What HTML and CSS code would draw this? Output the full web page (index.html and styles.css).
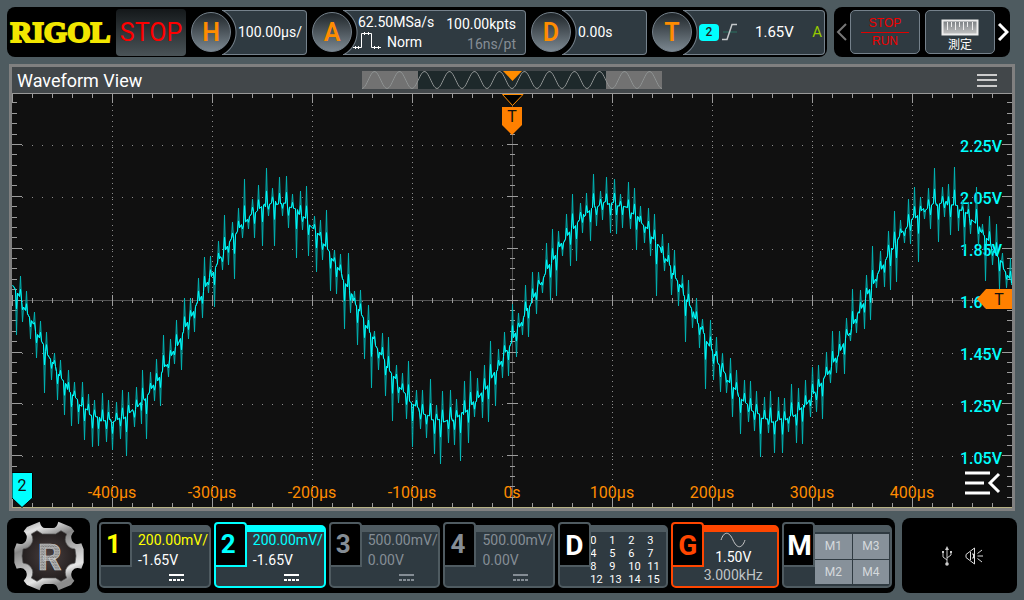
FILE: index.html
```html
<!DOCTYPE html>
<html lang="en">
  <head>
    <meta charset="UTF-8" />
    <meta name="viewport" content="width=device-width, initial-scale=1.0" />
    <title>Waveform View</title>
    <link rel="stylesheet" href="styles.css">
  </head>
  <body>
    <header class="topbar">
      <div class="panel status">
        <div class="logo">RIGOL</div>
        <button class="stop" type="button">STOP</button>
        <div class="module">
          <button class="knob" type="button">H</button>
          <div class="info">100.00µs/</div>
        </div>
        <div class="module">
          <button class="knob" type="button">A</button>
          <div class="info acquire">
            <div class="acquire-col">
              <span>62.50MSa/s</span>
              <span class="mode">
                <svg class="pulse" width="28" height="18" viewBox="0 0 28 18">
                  <path d="M0 15.500h8.500V1.500h10v14H28M2.500 14v3M5.500 14v3M21.500 14v3M25.500 14v3M11.500 0v3M15.500 0v3" fill="none" stroke="#fff" />
                </svg>
                Norm
              </span>
            </div>
            <div class="acquire-col right">
              <span>100.00kpts</span>
              <span class="dim">16ns/pt</span>
            </div>
          </div>
        </div>
        <div class="module">
          <button class="knob" type="button">D</button>
          <div class="info">0.00s</div>
        </div>
        <div class="module">
          <button class="knob" type="button">T</button>
          <div class="info trigger">
            <span class="source">2</span>
            <svg width="18" height="18" viewBox="0 0 18 18">
              <path d="M2 9h14" stroke="#2c5550" stroke-width="2" />
              <path d="M1 16.500h5L11 1.500h5" fill="none" stroke="#c4c8ca" stroke-width="1.500" />
            </svg>
            <span class="level">1.65V</span>
            <span class="auto">A</span>
          </div>
        </div>
      </div>
      <nav class="panel quick">
        <button class="arrow" type="button" aria-label="Previous">
          <svg width="12" height="18" viewBox="0 0 12 18"><path d="M10 1L2 9l8 8" fill="none" stroke="#777" stroke-width="2" /></svg>
        </button>
        <button class="tile run" type="button"><span class="run-top">STOP</span><span>RUN</span></button>
        <button class="tile measure" type="button">
          <svg width="38" height="18" viewBox="0 0 38 18">
            <defs>
              <linearGradient id="ruler" x2="0" y2="1"><stop stop-color="#777c80" /><stop offset="1" stop-color="#c5c5c5" /></linearGradient>
            </defs>
            <path d="M1.500 1.500h35v14h-35z" fill="url(#ruler)" stroke="#eee" stroke-width="2" />
            <path d="M6.500 3v8M10.500 3v5M14.500 3v8M18.500 3v5M22.500 3v8M26.500 3v5M31.500 3v8" stroke="#eee" />
          </svg>
          <span>測定</span>
        </button>
        <button class="arrow" type="button" aria-label="Next">
          <svg width="12" height="18" viewBox="0 0 12 18"><path d="M2 1l8 8-8 8" fill="none" stroke="#fff" stroke-width="3" /></svg>
        </button>
      </nav>
    </header>

    <main class="view">
      <div class="view-head">
        <h1>Waveform View</h1>
        <svg class="overview" width="300" height="18" viewBox="0 0 300 18">
          <path d="M0 0h300v18H0z" fill="#727272" />
          <path d="M56 0h188v18H56z" fill="#1e292b" />
          <path id="overviewWave" fill="none" stroke="#8f9393" />
          <path d="M141 0h19l-9.500 10z" fill="#ff8c00" />
        </svg>
        <button class="menu" type="button" aria-label="Menu">
          <svg width="20" height="14" viewBox="0 0 20 14"><path d="M0 2h20M0 7h20M0 13h20" stroke="#ccc" stroke-width="2" /></svg>
        </button>
      </div>
      <svg class="plot" viewBox="0 0 1000 415">
        <g id="grid">
          <path id="dots" fill="#8c8c8c" />
          <path d="M0 207.500h1000M500.500 0v415" stroke="#555" />
          <path id="ticks" fill="none" stroke="#9c9c9c" />
          <path d="M0 .500h1000" stroke="#999" />
          <path d="M0 414.500h1000" stroke="#b5b083" />
        </g>
        <g id="volts" class="volts"></g>
        <path id="spikes" class="spikes" />
        <path id="trace" class="trace" />
        <g id="times" class="times"></g>

        <path d="M490.500 1.500h20.500l-10.500 11z" fill="#000" stroke="#ff8c00" />
        <path d="M490 14h20v18l-10 10-10-10z" fill="#ff8000" />
        <text class="flag" x="500" y="29">T</text>
        <path d="M965 206l9-10h26v20h-26z" fill="#ff8000" />
        <text class="flag" x="987" y="212">T</text>
        <path d="M0 379.500h20.500v25.500l-10.500 9.500L0 405z" fill="#0ff" stroke="#000" />
        <text class="flag" x="10" y="398">2</text>
        <path d="M953 380h25M953 390h19M953 400h25M987 381l-9 9 9 9" fill="none" stroke="#fff" stroke-width="3" />
      </svg>
    </main>

    <footer class="bottombar">
      <button class="panel home" type="button" aria-label="Home">
        <svg width="70" height="70" viewBox="-105 -105 210 210">
          <defs>
            <linearGradient id="metal" x2=".4" y2="1">
              <stop stop-color="#8a8a8a" /><stop offset=".2" stop-color="#e2e2e2" /><stop offset=".4" stop-color="#858585" />
              <stop offset=".65" stop-color="#bcbcbc" /><stop offset=".85" stop-color="#e6e6e6" /><stop offset="1" stop-color="#8c8c8c" />
            </linearGradient>
            <radialGradient id="core"><stop stop-color="#4a4040" /><stop offset="1" stop-color="#241f1f" /></radialGradient>
            <pattern id="letter" width="10" height="8" patternUnits="userSpaceOnUse">
              <path d="M0 0h10v8H0z" fill="#b0b0b0" /><path d="M1 1l4 5M7 1l2 4" stroke="#4a4a4a" stroke-width="2" />
            </pattern>
          </defs>
          <path fill="url(#metal)" d="M-28-103Q-23-84-12-84H12Q23-84 28-103L66-87 76-74Q62-62 69-46 78-31 97-38L104-20V20L97 38Q78 31 69 46 62 62 76 74L66 87 28 103Q23 84 12 84H-12Q-23 84-28 103L-66 87-76 74Q-62 62-69 46-78 31-97 38L-104 20V-20L-97-38Q-78-31-69-46-62-62-76-74L-66-87Z" />
          <path fill="url(#core)" stroke="#555" stroke-width="2" d="M-36-76L-20-66H20L36-76 53-66Q44-48 54-34 62-22 78-21L81 0 78 21Q62 22 54 34 44 48 53 66L36 76 20 66H-20L-36 76-53 66Q-44 48-54 34-62 22-78 21L-81 0-78-21Q-62-22-54-34-44-48-53-66Z" />
          <text class="home-letter" x="2" y="41">R</text>
        </svg>
      </button>

      <div class="panel channels">
        <button class="channel ch1" type="button">
          <span class="tab">1</span>
          <span class="values">
            <span class="scale">200.00mV/</span>
            <span>-1.65V</span>
            <span class="dc"></span>
          </span>
        </button>
        <button class="channel ch2" type="button">
          <span class="tab">2</span>
          <span class="values">
            <span class="scale">200.00mV/</span>
            <span>-1.65V</span>
            <span class="dc"></span>
          </span>
        </button>
        <button class="channel off" type="button">
          <span class="tab">3</span>
          <span class="values">
            <span class="scale">500.00mV/</span>
            <span>0.00V</span>
            <span class="dc"></span>
          </span>
        </button>
        <button class="channel off" type="button">
          <span class="tab">4</span>
          <span class="values">
            <span class="scale">500.00mV/</span>
            <span>0.00V</span>
            <span class="dc"></span>
          </span>
        </button>
        <button class="channel digital" type="button">
          <span class="tab">D</span>
          <span class="bits">
            <span>0</span><span>1</span><span>2</span><span>3</span>
            <span>4</span><span>5</span><span>6</span><span>7</span>
            <span>8</span><span>9</span><span>10</span><span>11</span>
            <span>12</span><span>13</span><span>14</span><span>15</span>
          </span>
        </button>
        <button class="channel gen" type="button">
          <span class="tab">G</span>
          <span class="gen-values">
            <svg width="26" height="16" viewBox="0 0 26 16"><path d="M1 8C4-1 9-1 13 8s9 9 12 0" fill="none" stroke="#c8c8c8" /></svg>
            <span>1.50V</span>
            <span class="freq">3.000kHz</span>
          </span>
        </button>
        <button class="channel math" type="button">
          <span class="tab">M</span>
          <span class="maths"><span>M1</span><span>M3</span><span>M2</span><span>M4</span></span>
        </button>
      </div>

      <div class="panel tray">
        <svg width="10" height="20" viewBox="0 0 10 20">
          <path d="M5 2v15M5 14L1 11V6M5 12l4-3V5" fill="none" stroke="#ccc" />
          <path d="M5 0l2 4H3zM0 5h2v2H0zM8 5h2v2H8z" fill="#ccc" />
          <circle cx="5" cy="18" r="1.800" fill="#ccc" />
        </svg>
        <svg width="18" height="18" viewBox="0 0 18 18">
          <path d="M9.500 1L1 7.500v3L9.500 17zM5.500 5v8M7 7h1.500v4H7M12.500 6.500L17 3M12.500 9H18M12.500 11.500L17 15" fill="none" stroke="#ddd" />
        </svg>
      </div>
    </footer>
    <script src="wave.js"></script>
  </body>
</html>
```
FILE: styles.css
```css
* {
  box-sizing: border-box;
}
body {
  margin: 0;
  min-height: 100vh;
  padding: 7px;
  display: flex;
  flex-direction: column;
  gap: 7px;
  background-color: #4e5b60;
  color: #fff;
  font-family: Roboto, "Noto Sans CJK JP", sans-serif;
  font-size: 14px;
}
button {
  margin: 0;
  padding: 0;
  border: none;
  background: none;
  color: inherit;
  font: inherit;
  cursor: pointer;
}
svg {
  display: block;
}
.panel {
  background-color: #000;
  border-radius: 8px;
}

/* top bar */
.topbar {
  display: flex;
  gap: 7px;
  height: 50px;
  padding-right: 7px;
}
.status {
  flex: 1;
  display: grid;
  grid-template-columns: 101px 70px 116fr 214fr 116fr 173fr;
  gap: 5px;
  align-items: center;
  padding: 0 2px 0 3px;
}
.logo {
  color: #f2e600;
  font-family: "Liberation Serif", serif;
  font-size: 30px;
  font-weight: bold;
  line-height: 50px;
  text-align: center;
  -webkit-text-stroke: 2px #f2e600;
}
.stop {
  height: 47px;
  border-radius: 4px;
  background: linear-gradient(#14181a, #4a5357);
  color: #f00;
  font-size: 25px;
}
.module {
  display: flex;
  align-items: center;
}
.knob {
  width: 40px;
  height: 40px;
  flex: none;
  border: 1px solid #75818b;
  border-radius: 50%;
  background: linear-gradient(#20262a, #7b8790);
  color: #ff8c00;
  font-size: 25px;
  font-weight: 600;
  z-index: 1;
}
.info {
  flex: 1;
  height: 45px;
  margin-left: -9px;
  padding-left: 16px;
  display: flex;
  align-items: center;
  border: 1px solid #75818b;
  border-left: none;
  border-radius: 0 4px 4px 0;
  background: radial-gradient(circle at -11px 50%, #000 24px, #75818b 25px, #2f3a41 26px);
  white-space: nowrap;
}
.acquire {
  justify-content: space-between;
  padding: 0 9px 0 10px;
}
.acquire-col {
  display: flex;
  flex-direction: column;
  line-height: 20px;
}
.acquire-col > span:first-child {
  padding-left: 5px;
}
.mode {
  display: flex;
  gap: 6px;
}
.right {
  text-align: right;
  padding-top: 3px;
}
.dim {
  color: #858d95;
}
.trigger {
  padding: 0 2px 0 16px;
}
.source {
  width: 20px;
  height: 17px;
  border-radius: 4px;
  background-color: #0ff;
  color: #222;
  font-size: 12px;
  font-weight: 500;
  line-height: 17px;
  text-align: center;
  margin-right: 2px;
}
.level {
  margin-left: 16px;
  font-size: 15px;
}
.auto {
  margin-left: auto;
  color: #96c800;
  font-size: 15px;
}
.quick {
  display: grid;
  grid-template-columns: 16px 70px 5px 70px 15px;
  align-items: center;
}
.arrow {
  display: grid;
  place-items: center;
}
.tile {
  height: 44px;
  border: 1px solid #75818b;
  border-radius: 5px;
  background-color: #2f3a41;
}
.run {
  display: flex;
  flex-direction: column;
  align-items: center;
  justify-content: center;
  color: #f00000;
  font-family: "Liberation Sans", sans-serif;
  font-size: 12px;
  line-height: 17px;
}
.run-top {
  width: 48px;
  border-bottom: 1px solid #e00000;
}
.measure {
  grid-column: 4;
  display: flex;
  flex-direction: column;
  align-items: center;
  justify-content: flex-end;
  font-size: 12px;
  line-height: 16px;
}

/* waveform window */
.view {
  flex: 1;
  display: flex;
  flex-direction: column;
  margin: 0 2px;
  border: 3px solid #808080;
  background-color: #101010;
}
.view-head {
  display: grid;
  grid-template-columns: 1fr auto 1fr;
  align-items: center;
  height: 26px;
  padding: 0 15px 0 5px;
  background-color: #42474a;
}
.view-head h1 {
  margin: 0;
  font-size: 18px;
  font-weight: 400;
}
.overview {
  margin-left: 10px;
}
.menu {
  justify-self: end;
}
.plot {
  width: 100%;
  flex: 1;
}
.plot text {
  font-size: 16px;
}
.volts {
  fill: #0ff;
  font-weight: 500;
  text-anchor: end;
}
.times {
  fill: #ff8c00;
  text-anchor: middle;
}
.flag {
  fill: #111;
  text-anchor: middle;
}
.trace,
.spikes {
  fill: none;
  stroke: #0ff;
  stroke-linejoin: bevel;
}
.spikes {
  stroke: #00b4b4;
}

/* bottom bar */
.bottombar {
  display: flex;
  gap: 7px;
  height: 75px;
}
.home {
  width: 83px;
  display: grid;
  place-items: center;
}
.home-letter {
  fill: url(#letter);
  stroke: #ccc;
  stroke-width: 2px;
  font-size: 112px;
  font-weight: 700;
  text-anchor: middle;
}
.channels {
  flex: 1;
  display: grid;
  grid-template-columns: 112fr 112fr 112fr 112fr 109fr 108fr 110fr;
  gap: 3px;
  padding: 7px 3px 5px 2px;
}
.channel {
  --edge: #4f5b61;
  position: relative;
  display: flex;
  align-items: stretch;
  border: 2px solid var(--edge);
  border-top-width: 7px;
  border-radius: 5px;
  background-color: #2f3a41;
  text-align: left;
  white-space: nowrap;
}
.tab {
  position: absolute;
  left: -2px;
  top: -10px;
  width: 33px;
  height: 45px;
  border: 2px solid var(--edge);
  border-radius: 4px 4px 0 0;
  background-color: #000;
  color: var(--ink, #fff);
  font-size: 26px;
  font-weight: 700;
  line-height: 40px;
  padding-left: 5px;
}
.values {
  display: flex;
  flex-direction: column;
  padding-left: 37px;
  line-height: 20px;
}
.scale {
  color: var(--ink);
  margin-top: -2px;
}
.dc {
  width: 15px;
  height: 7px;
  margin: 4px 0 0 31px;
  border-top: 2px solid;
  background: repeating-linear-gradient(90deg, currentColor 0 3px, transparent 3px 4px) bottom / 100% 2px no-repeat;
}
.ch1 {
  --ink: #ff0;
}
.ch2 {
  --ink: #0ff;
  --edge: #0ff;
}
.off {
  --ink: #858d95;
  color: #858d95;
}
.bits {
  display: grid;
  grid-template-columns: repeat(4, 19px);
  grid-auto-rows: 13px;
  padding: 2px 0 0 30px;
  font-size: 11px;
  line-height: 13px;
}
.digital .tab,
.gen .tab,
.math .tab {
  font-size: 28px;
  line-height: 44px;
}
.math .tab {
  padding-left: 3px;
}
.gen {
  --ink: #ff4600;
  --edge: #ff4600;
}
.gen-values {
  flex: 1;
  display: flex;
  flex-direction: column;
  align-items: center;
  padding-left: 16px;
  line-height: 18px;
}
.freq {
  color: #c0c4c6;
}
.maths {
  flex: 1;
  display: grid;
  grid-template-columns: 1fr 1fr;
  gap: 1px;
  margin: 2px 1px 2px 31px;
  color: #d5d9dc;
  font-size: 12px;
  text-align: center;
}
.maths span {
  background-color: #87919a;
  line-height: 24px;
}
.tray {
  width: 115px;
  display: flex;
  align-items: center;
  justify-content: center;
  gap: 13px;
  padding-left: 5px;
}
```
FILE: wave.js
```js
// Peak samples [x, y] of channel 2, screen coordinates
const peaks = [
  [12, 286], [16, 335], [20, 276], [22, 322], [26, 291], [30, 339], [34, 312], [36, 358], [40, 321], [44, 393],
  [46, 332], [51, 380], [54, 353], [57, 400], [60, 360], [64, 415], [68, 370], [71, 426], [74, 382], [78, 424],
  [82, 382], [84, 440], [88, 394], [92, 447], [94, 400], [98, 446], [102, 393], [106, 442], [108, 400], [112, 450],
  [116, 402], [120, 439], [122, 390], [126, 456], [128, 392], [134, 427], [136, 387], [141, 424], [142, 370], [146, 439],
  [150, 372], [154, 401], [156, 359], [160, 406], [163, 335], [168, 377], [170, 339], [174, 364], [176, 320], [181, 370],
  [184, 298], [188, 339], [190, 298], [194, 332], [198, 278], [202, 318], [204, 257], [208, 293], [210, 256], [214, 307],
  [218, 241], [222, 270], [224, 215], [228, 265], [232, 222], [234, 279], [238, 208], [242, 238], [244, 179], [248, 229],
  [252, 199], [254, 238], [258, 185], [262, 246], [266, 168], [268, 216], [272, 188], [274, 246], [279, 177], [282, 216],
  [286, 176], [288, 228], [292, 194], [296, 258], [300, 191], [302, 230], [306, 186], [308, 256], [314, 216], [316, 272],
  [320, 220], [322, 260], [326, 210], [330, 291], [334, 250], [336, 294], [340, 254], [344, 329], [348, 253], [350, 313],
  [354, 291], [357, 345], [360, 290], [364, 359], [368, 305], [371, 388], [374, 331], [378, 370], [382, 333], [385, 396],
  [388, 337], [392, 421], [396, 365], [398, 403], [402, 373], [406, 419], [408, 361], [412, 447], [416, 390], [420, 429],
  [422, 390], [426, 438], [430, 379], [434, 454], [436, 405], [440, 464], [442, 391], [448, 443], [450, 390], [454, 445],
  [456, 399], [460, 461], [464, 381], [468, 443], [470, 371], [474, 417], [477, 378], [482, 418], [484, 365], [488, 422],
  [490, 341], [495, 406], [498, 349], [502, 378], [504, 332], [508, 376], [512, 304], [516, 357], [518, 313], [522, 335],
  [525, 285], [528, 337], [532, 272], [536, 314], [538, 272], [542, 293], [546, 243], [550, 300], [552, 229], [556, 296],
  [558, 231], [562, 256], [566, 214], [570, 266], [572, 194], [576, 261], [580, 203], [582, 233], [586, 193], [590, 241],
  [593, 174], [596, 226], [600, 191], [602, 220], [606, 177], [610, 233], [614, 179], [616, 234], [620, 194], [622, 228],
  [628, 182], [630, 229], [634, 188], [636, 250], [640, 206], [644, 243], [648, 208], [650, 256], [654, 214], [656, 296],
  [662, 234], [664, 271], [668, 243], [671, 295], [674, 250], [678, 306], [682, 275], [685, 342], [688, 280], [692, 328],
  [696, 298], [699, 348], [702, 319], [705, 389], [710, 320], [713, 380], [716, 337], [720, 392], [722, 353], [726, 393],
  [730, 358], [732, 417], [736, 370], [740, 434], [744, 380], [748, 422], [750, 381], [754, 431], [756, 391], [760, 457],
  [764, 397], [768, 433], [770, 391], [774, 453], [778, 397], [782, 453], [784, 398], [788, 432], [791, 384], [796, 443],
  [798, 388], [802, 444], [805, 380], [810, 417], [812, 367], [816, 412], [818, 365], [822, 419], [826, 352], [830, 383],
  [832, 331], [836, 373], [839, 331], [844, 374], [846, 318], [850, 341], [852, 289], [856, 333], [860, 290], [864, 329],
  [866, 275], [870, 320], [872, 246], [876, 288], [880, 251], [884, 287], [888, 231], [890, 290], [894, 211], [896, 282],
  [900, 220], [904, 243], [908, 199], [910, 244], [914, 187], [918, 262], [920, 197], [924, 219], [928, 188], [930, 229],
  [934, 168], [938, 242], [942, 187], [944, 217], [948, 184], [950, 235], [954, 167], [958, 231], [962, 200], [964, 250],
  [968, 202], [970, 234], [976, 187], [978, 246], [982, 224], [985, 281], [989, 216], [992, 265], [996, 224], [999, 289],
  [1002, 253], [1006, 288], [1010, 258], [1011, 285]
];
const left = 12;
const top0 = 93;
const peakAt = new Map(peaks);

function buildTrace(reach) {
  const points = [];
  for (let x = left; x <= 1011; x++) {
    const noise = ((x * 7919) % 11) / 3 - 1.7;
    const base = 312 + 109 * -Math.cos((2 * Math.PI * (x - 609)) / 333) + noise;
    const y = peakAt.has(x) ? base + (peakAt.get(x) - base) * reach : base;
    points.push(`${x - left + 0.5} ${(y - top0).toFixed(1)}`);
  }
  return "M" + points.join("L");
}

function drawGrid() {
  let dots = "";
  let ticks = "";
  // columns
  for (let i = 1; i < 10; i++) {
    for (let y = 12; y < 400; y += 5.2) dots += `M${i * 100} ${Math.round(y)}h1v1h-1z`;
  }
  // rows
  for (let j = 1; j < 8; j++) {
    for (let x = 10; x < 990; x += 10) dots += `M${x} ${Math.round(j * 51.9)}h1v1h-1z`;
  }
  for (let i = 0; i <= 50; i++) {
    const x = i * 20 + 0.5;
    const big = i % 5 === 0;
    ticks += `M${x} 0v${big ? 10 : 5}M${x} 415v${big ? -10 : -5}M${x} ${big ? 202 : 205}v${big ? 11 : 5}`;
  }
  for (let j = 1; j < 40; j++) {
    const y = Math.round(j * 10.38) - 0.5;
    const big = j % 5 === 0;
    ticks += `M0 ${y}h${big ? 10 : 5}M1000 ${y}h${big ? -10 : -5}M${big ? 495 : 498} ${y}h${big ? 11 : 5}`;
  }
  document.getElementById("dots").setAttribute("d", dots);
  document.getElementById("ticks").setAttribute("d", ticks);
}

function addLabel(group, x, y, text) {
  const label = document.createElementNS("http://www.w3.org/2000/svg", "text");
  label.setAttribute("x", x);
  label.setAttribute("y", y);
  label.textContent = text;
  document.getElementById(group).appendChild(label);
}

function drawOverview() {
  let d = "";
  for (let x = 0; x <= 300; x++) {
    d += `${x ? "L" : "M"}${x} ${(9 + 8.5 * Math.cos((2 * Math.PI * x) / 25)).toFixed(1)}`;
  }
  document.getElementById("overviewWave").setAttribute("d", d);
}

drawGrid();
document.getElementById("spikes").setAttribute("d", buildTrace(1));
document.getElementById("trace").setAttribute("d", buildTrace(0.4));
drawOverview();
["2.25V", "2.05V", "1.85V", "1.65V", "1.45V", "1.25V", "1.05V"].forEach((v, i) => addLabel("volts", 990, 59 + i * 52, v));
for (let t = -400; t <= 400; t += 100) {
  addLabel("times", 500 + t, 405, t === 0 ? "0s" : `${t}µs`);
}
```
